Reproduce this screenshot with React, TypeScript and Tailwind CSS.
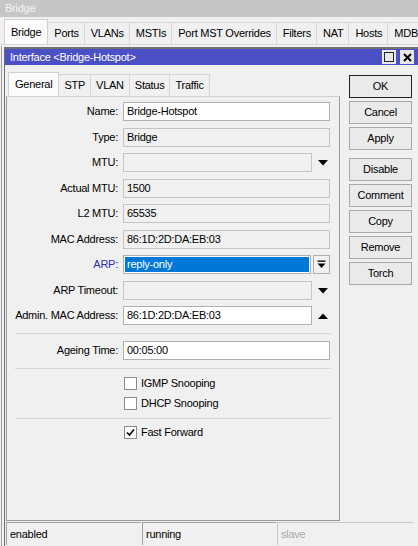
import React from "react";

const Down = () => (
  <svg width="10" height="6" viewBox="0 0 10 6"><polygon points="0,0 10,0 5,5.5" fill="#000" /></svg>
);
const Up = () => (
  <svg width="10" height="6" viewBox="0 0 10 6"><polygon points="0,6 10,6 5,0.5" fill="#000" /></svg>
);

type Kind = "white" | "gray" | "grayDrop" | "arp" | "whiteUp";

function Field({ label, value, kind, blue, mb }: { label: string; value?: string; kind: Kind; blue?: boolean; mb: string }) {
  let input: React.ReactNode;
  if (kind === "white") {
    input = <div className="w-[207px] h-[19px] bg-white border border-[#b0b0b0] pl-[3px] leading-[17px]">{value}</div>;
  } else if (kind === "gray") {
    input = <div className="w-[207px] h-[19px] bg-[#f0f0f0] border border-[#c4c4c4] pl-[3px] leading-[17px]">{value}</div>;
  } else if (kind === "grayDrop") {
    input = (
      <div className="flex items-center">
        <div className="w-[189px] h-[19px] bg-[#f0f0f0] border border-[#c4c4c4]" />
        <div className="w-[18px] flex justify-center pl-[3px]"><Down /></div>
      </div>
    );
  } else if (kind === "whiteUp") {
    input = (
      <div className="flex items-center">
        <div className="w-[189px] h-[19px] bg-white border border-[#b0b0b0] pl-[3px] leading-[17px]">{value}</div>
        <div className="w-[18px] flex justify-center pl-[3px]"><Up /></div>
      </div>
    );
  } else {
    input = (
      <div className="flex items-center">
        <div className="w-[188px] h-[19px] bg-white border border-[#b0b0b0] p-[1px]">
          <div className="w-full h-full bg-[#0078d7] text-white pl-[2px] leading-[15px]">{value}</div>
        </div>
        <div className="ml-[2px] w-[17px] h-[19px] border border-[#b0b0b0] bg-[#f0f0f0] flex items-center justify-center">
          <svg width="9" height="9" viewBox="0 0 9 9">
            <rect x="0.5" y="0.5" width="8" height="1.3" fill="#000" />
            <polygon points="0.5,3.5 8.5,3.5 4.5,8" fill="#000" />
          </svg>
        </div>
      </div>
    );
  }
  return (
    <div className={`flex items-center h-[19px] ${mb}`}>
      <div className={`w-[111px] text-right ${blue ? "text-[#2b2bb8]" : "text-black"}`}>{label}</div>
      <div className="ml-[5px]">{input}</div>
    </div>
  );
}

function Check({ label, checked }: { label: string; checked?: boolean }) {
  return (
    <div className="flex items-center h-[20px] pl-[117px]">
      <div className="w-[13px] h-[13px] border border-[#8c8c8c] bg-white flex items-center justify-center">
        {checked && (
          <svg width="9" height="9" viewBox="0 0 9 9">
            <polyline points="1,4.5 3.5,7 8,1.5" fill="none" stroke="#000" strokeWidth="1.7" />
          </svg>
        )}
      </div>
      <span className="ml-[4px]">{label}</span>
    </div>
  );
}

function Btn({ label, def }: { label: string; def?: boolean }) {
  return (
    <div
      className={`w-[63px] h-[23px] flex items-center justify-center bg-[#eaeaea] border ${def ? "border-[#222]" : "border-[#a8a8a8]"}`}
    >
      {label}
    </div>
  );
}

export default function App() {
  const outerTabs = ["Ports", "VLANs", "MSTIs", "Port MST Overrides", "Filters", "NAT", "Hosts", "MDB"];
  const innerTabs = ["STP", "VLAN", "Status", "Traffic"];
  return (
    <div className="w-[418px] h-[546px] bg-[#f0f0f0] flex flex-col overflow-hidden font-['Liberation_Sans',Arial,sans-serif] text-[11px] tracking-[-0.25px] text-black leading-none">
      <div className="h-[17px] bg-[#c6c6c6] text-[#f4f4f4] pl-[5px] leading-[17px] text-[11px]">Bridge</div>
      <div className="h-[28px] flex items-end pl-[4px] border-b border-[#d8d8d8]">
        <div className="h-[25px] px-[6px] bg-[#fbfbfb] border border-b-0 border-[#d0d0d0] flex items-center">Bridge</div>
        {outerTabs.map((t) => (
          <div key={t} className="h-[22px] pl-[6px] pr-[5px] bg-[#f0f0f0] border-r border-t border-[#d6d6d6] flex items-center whitespace-nowrap">
            {t}
          </div>
        ))}
      </div>
      <div className="flex-1 flex flex-col ml-[1px] mt-[1px] border-l border-[#a0a0a0]">
        <div className="flex-1 flex flex-col ml-[2px] mt-[1px] border-l border-t-2 border-[#707070]">
          <div className="h-[16px] bg-[#4b50c6] text-white flex items-center justify-between pl-[5px] pr-[4px]">
            <span>Interface &lt;Bridge-Hotspot&gt;</span>
            <div className="flex gap-[4px]">
              <div className="w-[14px] h-[14px] bg-[#e8e8e8] flex items-center justify-center">
                <div className="w-[10px] h-[10px] border border-[#222]" />
              </div>
              <div className="w-[14px] h-[14px] bg-[#e8e8e8] flex items-center justify-center">
                <svg width="9" height="9" viewBox="0 0 9 9">
                  <path d="M1 1 L8 8 M8 1 L1 8" stroke="#000" strokeWidth="2" />
                </svg>
              </div>
            </div>
          </div>
          <div className="flex-1 flex">
            <div className="w-[335px] flex flex-col">
              <div className="h-[31px] flex items-end pl-[3px]">
                <div className="h-[24px] px-[6px] bg-[#fbfbfb] border border-b-0 border-[#d0d0d0] flex items-center">General</div>
                {innerTabs.map((t) => (
                  <div key={t} className="h-[22px] px-[5px] bg-[#f0f0f0] border-r border-t border-[#d6d6d6] flex items-center">
                    {t}
                  </div>
                ))}
              </div>
              <div className="flex-1 ml-[1px] border border-[#9a9a9a] border-t-[#d0d0d0] pt-[5px]">
                <Field label="Name:" value="Bridge-Hotspot" kind="white" mb="mb-[7px]" />
                <Field label="Type:" value="Bridge" kind="gray" mb="mb-[6px]" />
                <Field label="MTU:" kind="grayDrop" mb="mb-[7px]" />
                <Field label="Actual MTU:" value="1500" kind="gray" mb="mb-[6px]" />
                <Field label="L2 MTU:" value="65535" kind="gray" mb="mb-[7px]" />
                <Field label="MAC Address:" value="86:1D:2D:DA:EB:03" kind="gray" mb="mb-[6px]" />
                <Field label="ARP:" value="reply-only" kind="arp" blue mb="mb-[7px]" />
                <Field label="ARP Timeout:" kind="grayDrop" mb="mb-[6px]" />
                <Field label="Admin. MAC Address:" value="86:1D:2D:DA:EB:03" kind="whiteUp" mb="mb-[0px]" />
                <div className="mx-[8px] mt-[8px] mb-[7px] border-t border-[#d6d6d6]" />
                <Field label="Ageing Time:" value="00:05:00" kind="white" mb="mb-[0px]" />
                <div className="mx-[8px] mt-[8px] mb-[4px] border-t border-[#d6d6d6]" />
                <Check label="IGMP Snooping" />
                <Check label="DHCP Snooping" />
                <div className="mx-[8px] mt-[5px] mb-[3px] border-t border-[#d6d6d6]" />
                <Check label="Fast Forward" checked />
              </div>
            </div>
            <div className="ml-[9px] pt-[10px] flex flex-col">
              <div className="flex flex-col gap-[3px]">
                <Btn label="OK" def />
                <Btn label="Cancel" />
                <Btn label="Apply" />
              </div>
              <div className="flex flex-col gap-[3px] mt-[8px]">
                <Btn label="Disable" />
                <Btn label="Comment" />
                <Btn label="Copy" />
                <Btn label="Remove" />
                <Btn label="Torch" />
              </div>
            </div>
          </div>
          <div className="h-[25px] flex pt-[1px] pl-[1px] gap-[1px]">
            <div className="w-[135px] h-[23px] border-t border-l border-[#a0a0a0] pl-[3px] flex items-center">enabled</div>
            <div className="w-[134px] h-[23px] border-t border-l border-[#a0a0a0] pl-[3px] flex items-center">running</div>
            <div className="w-[136px] h-[23px] border-t border-l border-[#c8c8c8] pl-[3px] flex items-center text-[#a8a8a8]">slave</div>
          </div>
        </div>
      </div>
    </div>
  );
}
